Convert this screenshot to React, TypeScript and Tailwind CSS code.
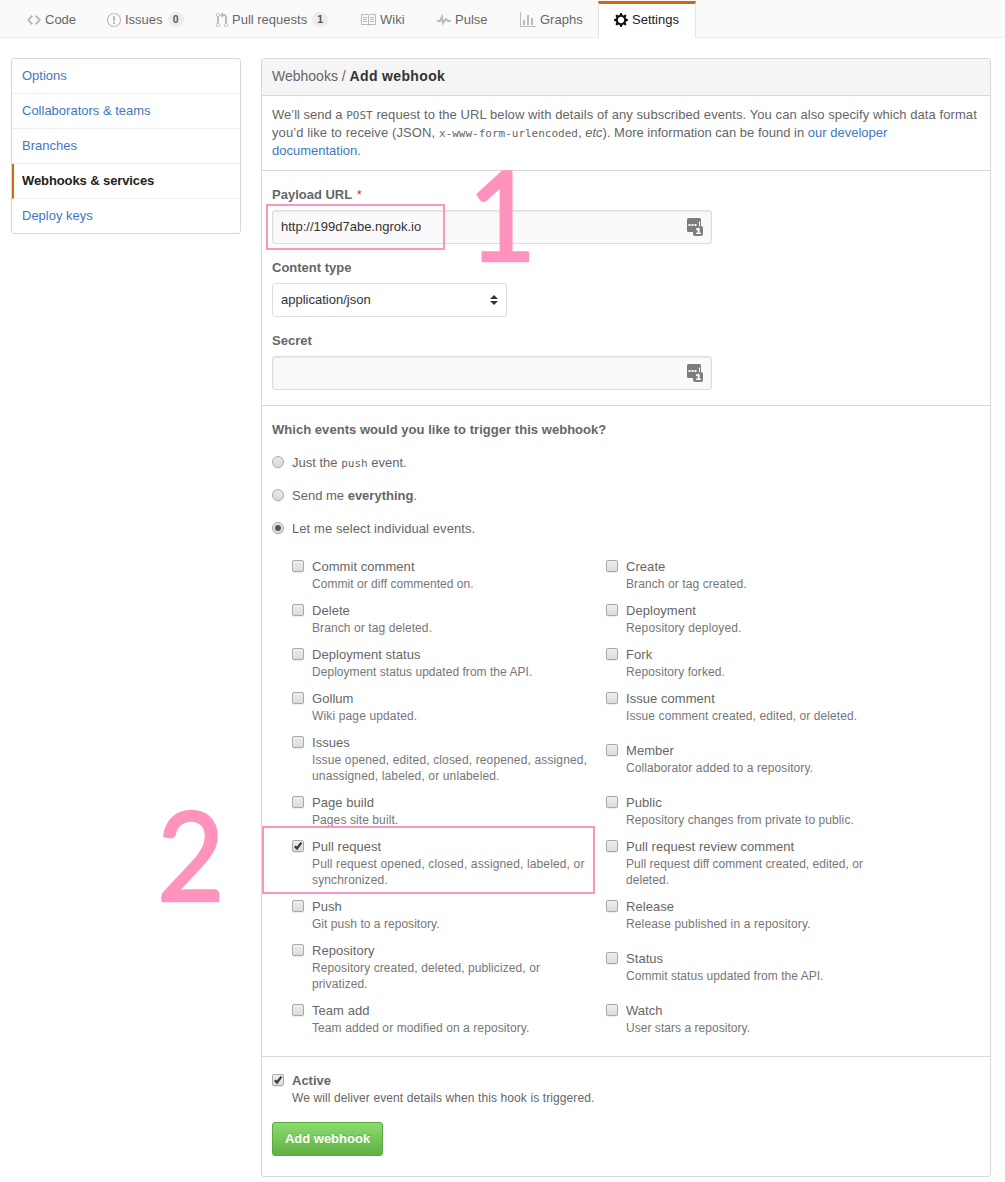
import React from "react";

type IconProps = { d: string; w: number; className?: string };

const Icon = ({ d, w, className = "" }: IconProps) => (
  <svg width={w} height={16} viewBox={`0 0 ${w} 16`} fill="currentColor" className={`shrink-0 ${className}`}>
    <path fillRule="evenodd" d={d} />
  </svg>
);

const paths = {
  code: "M9.5 3L8 4.5 11.5 8 8 11.5 9.5 13 14 8 9.5 3zm-5 0L0 8l4.5 5L6 11.5 2.5 8 6 4.5 4.5 3z",
  issue:
    "M7 2.1c3.24 0 5.9 2.66 5.9 5.9s-2.66 5.9-5.9 5.9A5.9 5.9 0 0 1 1.1 8c0-3.24 2.66-5.9 5.9-5.9zM7 1C3.14 1 0 4.14 0 8s3.14 7 7 7 7-3.14 7-7-3.14-7-7-7zm1 3H6v5h2V4zm0 6H6v2h2v-2z",
  pull: "M11 11.28V5c-.03-.78-.34-1.47-.94-2.06C9.46 2.35 8.78 2.03 8 2H7V0L4 3l3 3V4h1c.27.02.48.11.69.31.21.2.3.42.31.69v6.28A1.993 1.993 0 0 0 10 15a1.993 1.993 0 0 0 1-3.72zm-1 2.92c-.66 0-1.2-.55-1.2-1.2 0-.65.55-1.2 1.2-1.2.65 0 1.2.55 1.2 1.2 0 .65-.55 1.2-1.2 1.2zM4 3c0-1.11-.89-2-2-2a1.993 1.993 0 0 0-1 3.72v6.56A1.993 1.993 0 0 0 2 15a1.993 1.993 0 0 0 1-3.72V4.72c.59-.34 1-.98 1-1.72zm-.8 10c0 .66-.55 1.2-1.2 1.2-.65 0-1.2-.55-1.2-1.2 0-.65.55-1.2 1.2-1.2.65 0 1.2.55 1.2 1.2zM2 4.2C1.34 4.2.8 3.65.8 3c0-.65.55-1.2 1.2-1.2.65 0 1.2.55 1.2 1.2 0 .65-.55 1.2-1.2 1.2z",
  book: "M2 5h4v1H2V5zm0 3h4V7H2v1zm0 2h4V9H2v1zm11-5H9v1h4V5zm0 2H9v1h4V7zm0 2H9v1h4V9zm2-6v9c0 .55-.45 1-1 1H8.5l-1 1-1-1H1c-.55 0-1-.45-1-1V3c0-.55.45-1 1-1h5.5l1 1 1-1H14c.55 0 1 .45 1 1zm-8 .5L6.5 3H1v9h6V3.5zm7-.5H8.5l-.5.5V12h6V3z",
  pulse: "M11.5 8L8.8 5.4 6.6 8.5 5.5 1.6 2.38 8H0v2h3.6l.9-1.8.9 5.4L9 8.5l1.6 1.5H14V8h-2.5z",
  graph: "M16 14v1H0V0h1v14h15zM5 13H3V8h2v5zm4 0H7V3h2v10zm4 0h-2V6h2v7z",
  gear: "M14 8.77v-1.6l-1.94-.64-.45-1.09.88-1.84-1.13-1.13-1.81.91-1.09-.45-.69-1.92h-1.6l-.63 1.94-1.11.45-1.84-.88-1.13 1.13.91 1.81-.45 1.09L0 7.23v1.59l1.94.64.45 1.09-.88 1.84 1.13 1.13 1.81-.91 1.09.45.69 1.92h1.59l.63-1.94 1.11-.45 1.84.88 1.13-1.13-.92-1.81.47-1.09L14 8.75v.02zM7 11.2c-1.77 0-3.2-1.43-3.2-3.2S5.23 4.8 7 4.8s3.2 1.43 3.2 3.2-1.43 3.2-3.2 3.2z",
};

const Badge = ({ children }: { children: React.ReactNode }) => (
  <span className="ml-px flex h-[15px] w-4 items-center justify-center rounded-full bg-[#ececec] text-[10.5px] font-bold text-[#555]">
    {children}
  </span>
);

type TabProps = { width: string; icon: string; iconWidth: number; label: string; badge?: number };

const Tab = ({ width, icon, iconWidth, label, badge }: TabProps) => (
  <div className={`flex items-center gap-1 pl-4 pt-[2px] ${width}`}>
    <Icon d={icon} w={iconWidth} className="text-[#bbb]" />
    <span>{label}</span>
    {badge !== undefined && <Badge>{badge}</Badge>}
  </div>
);

const Check = ({ checked = false }: { checked?: boolean }) => (
  <span className="mt-[2px] block size-3 shrink-0 rounded-[2px] border border-[#a9a9a9] bg-linear-to-b from-[#eee] to-[#dcdcdc] shadow-[0_1px_1px_rgba(0,0,0,0.08)]">
    {checked && (
      <svg width="10" height="10" viewBox="0 0 10 10" className="block">
        <path d="M1.8 5.2 4 7.4 8.4 1.6" fill="none" stroke="#3c3c3c" strokeWidth="2.3" />
      </svg>
    )}
  </span>
);

const Radio = ({ checked = false, children }: { checked?: boolean; children: React.ReactNode }) => (
  <label className="flex h-[33px] items-center">
    <span className="mb-[2px] flex size-3 shrink-0 items-center justify-center rounded-full border border-[#a9a9a9] bg-linear-to-b from-[#e8e8e8] to-[#dcdcdc] shadow-[0_1px_1px_rgba(0,0,0,0.08)]">
      {checked && <span className="size-[6px] rounded-full bg-[#555]" />}
    </span>
    <span className="ml-2">{children}</span>
  </label>
);

const Code = ({ children }: { children: React.ReactNode }) => (
  <code className="font-['DejaVu_Sans_Mono',monospace] text-[11px] leading-none tracking-normal">{children}</code>
);

const Vault = () => (
  <svg width="17" height="18" viewBox="0 0 17 18" className="ml-auto mr-[7px]">
    <rect width="14" height="14" rx="1.5" fill="#7d7d7d" />
    <path d="M1.5 6h2v2h-2zM4.5 6h2v2h-2zM7.5 6h2v2h-2zM12 3.5h1v5h-1z" fill="#fff" />
    <rect x="6" y="8" width="10" height="10" rx="2" fill="#7d7d7d" />
    <path d="M9 10.8 11 9.8h1.6v4.9H14V16H9v-1.3h1.6v-2.9L9 12.3z" fill="#fff" />
  </svg>
);

const Field = ({ label, required, value }: { label: string; required?: boolean; value?: string }) => (
  <div className="h-[73px]">
    <div className="h-[25px] pt-px font-bold leading-[18px]">
      {label}
      {required && <span className="ml-px font-normal text-[#c33]"> *</span>}
    </div>
    <div className="flex h-[34px] w-[440px] items-center rounded-[3px] border border-[#ddd] bg-[#fafafa] pl-2 text-[#333] shadow-[inset_0_1px_2px_rgba(0,0,0,0.075)]">
      <span>{value}</span>
      <Vault />
    </div>
  </div>
);

const snug = "tracking-[0.04px]";
const wide = "tracking-[0.09px]";
const wider = "tracking-[0.14px]";

const events: { title: string; lines: string[]; spacing: string; checked?: boolean }[] = [
  { title: "Commit comment", lines: ["Commit or diff commented on."], spacing: snug },
  { title: "Create", lines: ["Branch or tag created."], spacing: wide },
  { title: "Delete", lines: ["Branch or tag deleted."], spacing: wide },
  { title: "Deployment", lines: ["Repository deployed."], spacing: wider },
  { title: "Deployment status", lines: ["Deployment status updated from the API."], spacing: snug },
  { title: "Fork", lines: ["Repository forked."], spacing: wide },
  { title: "Gollum", lines: ["Wiki page updated."], spacing: wider },
  { title: "Issue comment", lines: ["Issue comment created, edited, or deleted."], spacing: wide },
  {
    title: "Issues",
    lines: ["Issue opened, edited, closed, reopened, assigned,", "unassigned, labeled, or unlabeled."],
    spacing: wider,
  },
  { title: "Member", lines: ["Collaborator added to a repository."], spacing: wide },
  { title: "Page build", lines: ["Pages site built."], spacing: wide },
  { title: "Public", lines: ["Repository changes from private to public."], spacing: wide },
  {
    title: "Pull request",
    lines: ["Pull request opened, closed, assigned, labeled, or", "synchronized."],
    spacing: wider,
    checked: true,
  },
  {
    title: "Pull request review comment",
    lines: ["Pull request diff comment created, edited, or", "deleted."],
    spacing: snug,
  },
  { title: "Push", lines: ["Git push to a repository."], spacing: snug },
  { title: "Release", lines: ["Release published in a repository."], spacing: wider },
  { title: "Repository", lines: ["Repository created, deleted, publicized, or", "privatized."], spacing: wide },
  { title: "Status", lines: ["Commit status updated from the API."], spacing: snug },
  { title: "Team add", lines: ["Team added or modified on a repository."], spacing: wide },
  { title: "Watch", lines: ["User stars a repository."], spacing: snug },
];

const Sidebar = () => (
  <nav className="w-[230px] self-start rounded-[3px] border border-[#d8d8d8] text-[#4078c0]">
    {["Options", "Collaborators & teams", "Branches", "Webhooks & services", "Deploy keys"].map((t) => (
      <div
        key={t}
        className={
          t === "Webhooks & services"
            ? "h-[35px] border-b border-l-2 border-b-[#eee] border-l-[#d26911] pl-2 font-bold leading-[34px] tracking-[-0.1px] text-[#222]"
            : "h-[35px] border-b border-[#eee] pl-[10px] leading-[34px] last:h-[34px] last:border-b-0"
        }
      >
        {t}
      </div>
    ))}
  </nav>
);

const StepNumber = ({ n, scale, className }: { n: number; scale: number; className: string }) => (
  <svg width="80" height="110" className={`absolute overflow-visible ${className}`}>
    <text
      x="0"
      y="96"
      transform={`scale(${scale} 1)`}
      fontFamily="Lato, sans-serif"
      fontSize="124"
      fill="#ff93be"
      stroke="#ff93be"
      strokeWidth="2.5"
      strokeLinejoin="round"
    >
      {n}
    </text>
  </svg>
);

export default function App() {
  return (
    <div className="relative h-[1182px] w-[1005px] overflow-hidden whitespace-nowrap bg-white font-['Liberation_Sans',Arial,sans-serif] text-[13px] text-[#666]">
      <header className="flex h-[38px] border-b border-[#eee] bg-[#fafafa] pl-[11px]">
        <Tab width="w-20" icon={paths.code} iconWidth={14} label="Code" />
        <Tab width="w-[109px]" icon={paths.issue} iconWidth={14} label="Issues" badge={0} />
        <Tab width="w-[145px]" icon={paths.pull} iconWidth={12} label="Pull requests" badge={1} />
        <Tab width="w-[76px]" icon={paths.book} iconWidth={15} label="Wiki" />
        <Tab width="w-[83px]" icon={paths.pulse} iconWidth={14} label="Pulse" />
        <Tab width="w-[94px]" icon={paths.graph} iconWidth={16} label="Graphs" />
        <div className="mt-px flex h-[37px] w-[98px] items-center gap-1 border-x border-t-[3px] border-x-[#e5e5e5] border-t-[#d26911] bg-white pb-[2px] pl-[15px] text-[#222]">
          <Icon d={paths.gear} w={14} className="text-[#111]" />
          <span>Settings</span>
        </div>
      </header>

      <div className="flex gap-5 pl-[11px] pt-5">
        <Sidebar />
        <main className="h-[1119px] w-[730px] rounded-[3px] border border-[#d8d8d8]">
          <h1 className="h-[37px] border-b border-[#d8d8d8] bg-[#f5f5f5] pl-[10px] text-sm leading-[35px]">
            Webhooks / <b className="tracking-[0.35px] text-[#333]">Add webhook</b>
          </h1>

          <section className="h-[75px] border-b border-[#d8d8d8] pl-[10px] pt-[10px] leading-[18px]">
            <p className="h-[18px]">
              We’ll send a <Code>POST</Code>
              <span className="tracking-[0.075px]">
                {" "}
                request to the URL below with details of any subscribed events. You can also specify which data format
              </span>
            </p>
            <p className="h-[18px]">
              <span className="tracking-[0.1px]">you’d like to receive (JSON, </span>
              <Code>x-www-form-urlencoded</Code>, <i>etc</i>). More information can be found in{" "}
              <span className="text-[#4078c0]">our developer</span>
            </p>
            <p className="h-[18px]">
              <span className="text-[#4078c0]">documentation</span>.
            </p>
          </section>

          <section className="h-[235px] border-b border-[#d8d8d8] pl-[10px] pt-[14px]">
            <Field label="Payload URL" required value="http://199d7abe.ngrok.io" />
            <div className="h-[73px]">
              <div className="h-[25px] pt-px font-bold leading-[18px]">Content type</div>
              <div className="flex h-[34px] w-[235px] items-center justify-between rounded-[3px] border border-[#ddd] px-2 text-[#333]">
                <span>application/json</span>
                <svg width="8" height="10" viewBox="0 0 8 10" fill="#333">
                  <path d="M4 0 8 4H0zM4 10 0 6h8z" />
                </svg>
              </div>
            </div>
            <Field label="Secret" />
          </section>

          <section className="h-[651px] border-b border-[#d8d8d8] pl-[10px] pt-[15px]">
            <h2 className="h-[25px] font-bold leading-[18px] tracking-[0.04px]">
              Which events would you like to trigger this webhook?
            </h2>
            <Radio>
              Just the <Code>push</Code> event.
            </Radio>
            <Radio>
              Send me <b>everything</b>.
            </Radio>
            <Radio checked>
              <span className="tracking-[0.08px]">Let me select individual events.</span>
            </Radio>
            <div className="ml-5 mt-[13px] grid grid-cols-[314px_314px] items-center gap-y-[10px]">
              {events.map(({ title, lines, spacing, checked }) => (
                <div key={title} className="flex gap-2">
                  <Check checked={checked} />
                  <div>
                    <div className="leading-[18px] tracking-[0.05px]">{title}</div>
                    <div className={`text-xs leading-4 text-[#767676] ${spacing}`}>
                      {lines.map((l) => (
                        <div key={l}>{l}</div>
                      ))}
                    </div>
                  </div>
                </div>
              ))}
            </div>
          </section>

          <section className="pl-[10px] pt-[15px]">
            <div className="flex gap-2">
              <Check checked />
              <div>
                <div className="font-bold leading-[18px]">Active</div>
                <div className="text-xs leading-4 tracking-[0.1px]">
                  We will deliver event details when this hook is triggered.
                </div>
              </div>
            </div>
            <button className="mt-4 block h-[34px] w-[111px] rounded-[3px] border border-[#5ca941] bg-linear-to-b from-[#8add6d] to-[#60b044] font-bold text-white [text-shadow:0_-1px_0_rgba(0,0,0,0.15)]">
              Add webhook
            </button>
          </section>
        </main>
      </div>

      <div className="absolute left-[266px] top-[204px] h-[46px] w-[179px] border-2 border-[#ff93be]" />
      <div className="absolute left-[262px] top-[826px] h-[68px] w-[333px] border-2 border-[#ff93be]" />
      <StepNumber n={1} scale={0.95} className="left-[468px] top-[165px]" />
      <StepNumber n={2} scale={0.94} className="left-[157px] top-[805px]" />
    </div>
  );
}
